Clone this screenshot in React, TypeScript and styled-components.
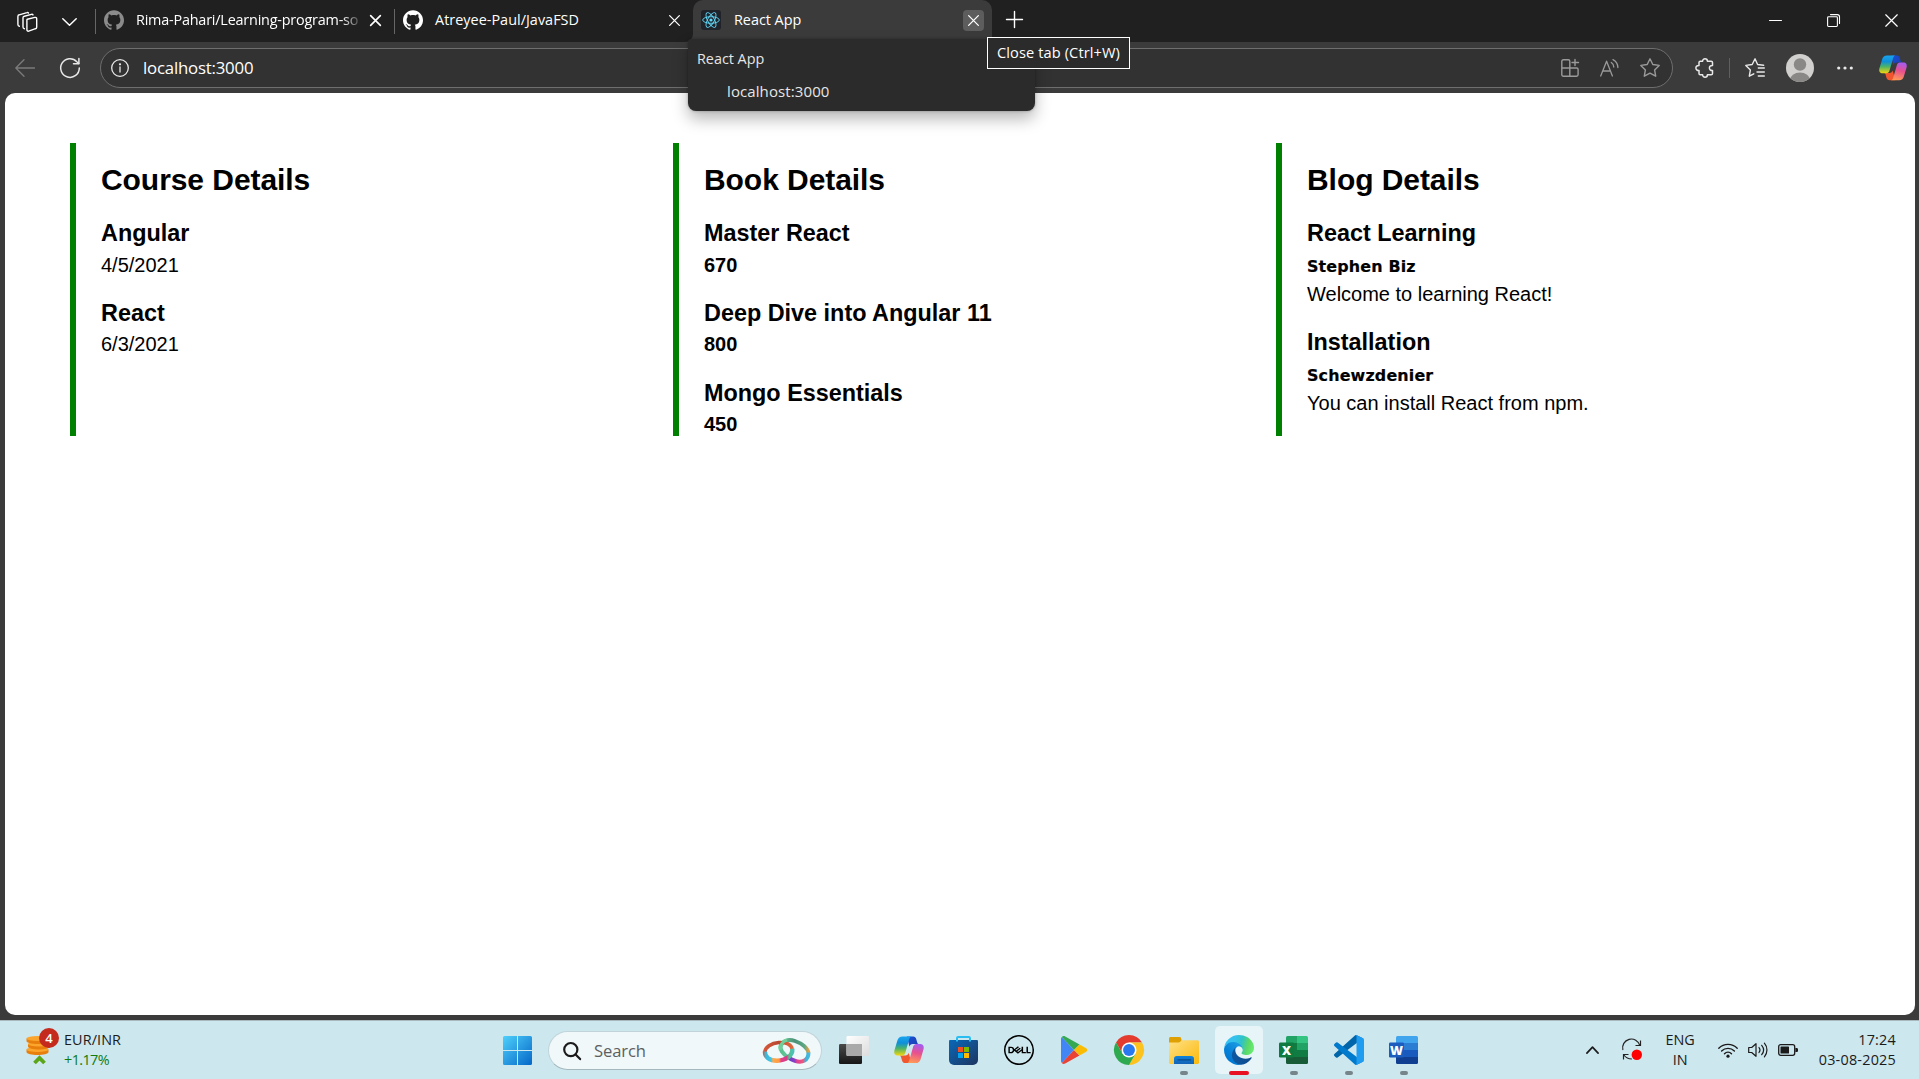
import React from "react";
import styled, { createGlobalStyle } from "styled-components";
import { SiGithub, SiDell } from "react-icons/si";

const UI = `"Open Sans", "Noto Sans", sans-serif`;

const GlobalStyle = createGlobalStyle`
  *, *::before, *::after { box-sizing: border-box; }
  html, body { margin: 0; padding: 0; overflow: hidden; background: #3b3b3b; }
  svg { display: block; flex: none; overflow: visible; }
  h2, h3, p { margin: 0; }
`;

const Desktop = styled.div`
  display: grid;
  grid-template-rows: 42px 51px 922px 5px 59px;
  width: 1919px;
  height: 1079px;
  background: #3b3b3b;
  font-family: ${UI};
  position: relative;
`;

/* ---------- tab strip ---------- */

const TabStrip = styled.header`
  display: flex;
  background: #202020;
  color: #fff;
`;

const StripTools = styled.div`
  display: flex;
  align-items: center;
  width: 95px;
  padding: 2px 0 0 17px;
  gap: 24px;
`;

const TabBox = styled.div<{ $active?: boolean; $width: number; $divided?: boolean }>`
  position: relative;
  display: flex;
  align-items: center;
  width: ${(p) => p.$width}px;
  height: 42px;
  padding: 0 8px 2px ${(p) => (p.$active ? 8 : 9)}px;
  background: ${(p) => (p.$active ? "#3b3b3b" : "transparent")};
  border-radius: ${(p) => (p.$active ? "10px 10px 0 0" : "0")};
  &::before {
    content: ${(p) => (p.$divided ? '""' : "none")};
    position: absolute;
    left: 0;
    top: 9px;
    width: 1px;
    height: 25px;
    background: #666;
  }
`;

const TabTitle = styled.span<{ $faded?: boolean; $spacing: number }>`
  flex: 1;
  margin-left: 12px;
  white-space: nowrap;
  font-size: 14.4px;
  line-height: 20px;
  letter-spacing: ${(p) => p.$spacing}px;
  mask-image: ${(p) => (p.$faded ? "linear-gradient(90deg, #000 90%, transparent 99%)" : "none")};
`;

const TabClose = styled.span<{ $hover?: boolean }>`
  display: flex;
  align-items: center;
  justify-content: center;
  width: 21px;
  height: 21px;
  border-radius: 4px;
  background: ${(p) => (p.$hover ? "#5d5d5d" : "transparent")};
`;

const ReactTile = styled.span`
  display: flex;
  align-items: center;
  justify-content: center;
  width: 20px;
  height: 20px;
  margin-right: 1px;
  border-radius: 3px;
  background: #20232a;
`;

const TabFoot = styled.svg`
  position: absolute;
  left: -8px;
  bottom: 0;
`;

const NewTab = styled.div`
  padding: 11px 0 0 14px;
`;

const WindowButtons = styled.div`
  display: flex;
  gap: 45px;
  margin-left: auto;
  padding: 14px 21px 0 0;
`;

/* ---------- toolbar ---------- */

const Toolbar = styled.nav`
  display: flex;
  align-items: center;
  padding: 0 12px 0 15px;
  color: #e8e8e8;
`;

const NavIcons = styled.div`
  display: flex;
  align-items: center;
  gap: 25px;
  width: 85px;
`;

const AddressBar = styled.div`
  display: flex;
  align-items: center;
  width: 1573px;
  height: 40px;
  padding: 0 12px 0 10px;
  border: 1px solid #6e6e6e;
  border-radius: 20px;
  background: #323232;
`;

const Url = styled.span`
  margin-left: 14px;
  color: #fff;
  font-size: 16.8px;
  line-height: 24px;
  letter-spacing: -0.2px;
`;

const AddressActions = styled.div`
  display: flex;
  align-items: center;
  gap: 21px;
  margin-left: auto;
  color: #9a9a9a;
`;

const ToolbarActions = styled.div`
  display: grid;
  grid-template-columns: 34px 16px 41px 51px 42px 28px;
  align-items: center;
  padding-left: 22px;
`;

const Divider = styled.span`
  width: 1px;
  height: 20px;
  background: #5f5f5f;
`;

/* ---------- overlays ---------- */

const TabCard = styled.div`
  position: absolute;
  left: 688px;
  top: 39px;
  z-index: 2;
  width: 347px;
  height: 72px;
  padding: 10px 9px;
  border-radius: 3px 3px 8px 8px;
  background: #2b2b2b;
  box-shadow: 0 8px 16px rgba(0, 0, 0, 0.28), 0 0 3px rgba(0, 0, 0, 0.3);
  color: #e6e6e6;
  font-size: 14.4px;
  line-height: 20px;
`;

const CardTitle = styled.div`
  letter-spacing: -0.02px;
`;

const CardUrl = styled.div`
  margin: 13px 0 0 30px;
  letter-spacing: 0.1px;
  font-size: 15px;
  line-height: 19px;
`;

const Tooltip = styled.div`
  position: absolute;
  left: 987px;
  top: 37px;
  z-index: 3;
  width: 143px;
  height: 32px;
  border: 1px solid #fff;
  background: #2b2b2b;
  color: #fff;
  font-size: 14.6px;
  line-height: 29px;
  letter-spacing: 0.11px;
  text-align: center;
  white-space: nowrap;
`;

/* ---------- page ---------- */

const Page = styled.main`
  margin: 0 4px 0 5px;
  padding: 50px 0 0 65px;
  border-radius: 10px;
  background: #fff;
  color: #000;
  font-family: "Liberation Sans", Arial, sans-serif;
`;

const Columns = styled.div`
  display: grid;
  grid-template-columns: repeat(3, 603px);
  grid-template-rows: 293px;
`;

const Entry = styled.article<{ $gap: number }>`
  margin-bottom: ${(p) => p.$gap}px;
`;

const Column = styled.section`
  border-left: 6px solid green;
  padding: 20px 0 0 25px;
  & > ${Entry}:last-child { margin-bottom: 0; }
`;

const Heading = styled.h2`
  margin-bottom: 22px;
  font-size: 30px;
  line-height: 34px;
  letter-spacing: -0.06px;
`;

const EntryTitle = styled.h3`
  margin-bottom: 6.6px;
  font-size: 23.4px;
  line-height: 28px;
`;

const Author = styled.p`
  margin: 9px 0 6px;
  font-family: "DejaVu Sans", "Liberation Sans", sans-serif;
  font-size: 15.9px;
  font-weight: 700;
  line-height: 21px;
  letter-spacing: 0.16px;
  -webkit-text-stroke: 0.2px #000;
`;

const Line = styled.p<{ $bold?: boolean }>`
  font-size: 20px;
  font-weight: ${(p) => (p.$bold ? 700 : 400)};
  line-height: 22px;
`;

/* ---------- taskbar ---------- */

const Taskbar = styled.footer`
  grid-row: 5;
  display: flex;
  align-items: center;
  background: #cde7ee;
  border-top: 1px solid #a9b8bc;
  color: #1b1b1b;
`;

const Widget = styled.div`
  display: flex;
  width: 503px;
  padding-left: 26px;
`;

const WidgetIcon = styled.div`
  position: relative;
  width: 38px;
  height: 40px;
`;

const Badge = styled.span`
  position: absolute;
  left: 13px;
  top: -2px;
  width: 20px;
  height: 20px;
  border-radius: 50%;
  background: #c42b1c;
  color: #fff;
  font-size: 13px;
  font-weight: 600;
  line-height: 20px;
  text-align: center;
`;

const TwoLines = styled.div<{ $align?: string; $spacing?: number }>`
  font-size: 14.4px;
  line-height: 20px;
  text-align: ${(p) => p.$align ?? "left"};
  letter-spacing: ${(p) => p.$spacing ?? 0}px;
  white-space: nowrap;
`;

const Gain = styled.div`
  color: #107c10;
  letter-spacing: -0.6px;
`;

const SearchBox = styled.div`
  display: flex;
  align-items: center;
  width: 274px;
  height: 39px;
  margin: 1px 4px 0 16px;
  padding: 0 11px 0 14px;
  border: 1px solid #c0d4da;
  border-bottom-color: #a5b8be;
  border-radius: 20px;
  background: #f0f8fa;
`;

const SearchLabel = styled.span`
  flex: 1;
  margin-left: 13px;
  color: #5c5f61;
  font-size: 16.6px;
  line-height: 22px;
  letter-spacing: -0.1px;
`;

const AppCell = styled.div`
  position: relative;
  display: flex;
  align-items: center;
  justify-content: center;
  width: 55px;
  height: 59px;
`;

const AppTile = styled.div<{ $current?: boolean }>`
  display: flex;
  align-items: center;
  justify-content: center;
  width: 48px;
  height: 48px;
  border-radius: 5px;
  background: ${(p) => (p.$current ? "#e7f4f8" : "transparent")};
`;

const Running = styled.span<{ $current?: boolean }>`
  position: absolute;
  bottom: 5px;
  left: 50%;
  width: ${(p) => (p.$current ? 20 : 8)}px;
  height: 4px;
  border-radius: 2px;
  background: ${(p) => (p.$current ? "#e81123" : "#768589")};
  transform: translateX(-50%);
`;

const Tray = styled.div`
  display: flex;
  align-items: center;
  margin-left: auto;
  padding-right: 23px;
`;

const TrayItem = styled.div<{ $left: number }>`
  margin-left: ${(p) => p.$left}px;
`;

/* ---------- line icons ---------- */

type StrokeProps = { w: number; h?: number; box: string; sw?: number; children: React.ReactNode };
const Stroke = ({ w, h, box, sw = 1.3, children }: StrokeProps) => (
  <svg width={w} height={h ?? w} viewBox={box} fill="none" stroke="currentColor" strokeWidth={sw} strokeLinecap="round" strokeLinejoin="round">
    {children}
  </svg>
);

const Cross = ({ size, sw = 1.4 }: { size: number; sw?: number }) => (
  <Stroke w={size} box="0 0 12 12" sw={sw}><path d="M.7.7l10.6 10.6M11.3.7L.7 11.3" /></Stroke>
);

const WorkspacesIcon = () => (
  <Stroke w={21} h={20} box="0 0 21 20" sw={1.4}>
    <path d="M10.3 7.2l7.6-1.8c1-.2 1.8.3 1.8 1.4v8.4c0 .8-.4 1.3-1.2 1.5l-6.8 2.4c-1 .3-1.8-.3-1.8-1.3V8.5c0-.7-.2-1.1.4-1.3z" />
    <path d="M16 2.9c-.3-.6-.9-.8-1.6-.6L7.3 4.2c-.9.2-1.3.8-1.3 1.6v9.2c0 .9.5 1.500 1.400 1.700" />
    <path d="M11.5.9C11.1.5 10.6.4 10 .6L2.200 2.800C1.300 3 .9 3.600.9 4.400v8.200c0 .9.5 1.500 1.400 1.700" />
  </Stroke>
);

const BackIcon = () => (
  <Stroke w={20} h={18} box="0 0 20 18"><path d="M9 .7L.8 9 9 17.3M.8 9h18.7" stroke="#7b7b7b" /></Stroke>
);

const ReloadIcon = () => (
  <Stroke w={20} box="0 0 20 20" sw={1.5}>
    <path d="M19.3 10A9.3 9.3 0 1 1 16.8 3.7L18.8 5.5" />
    <path d="M18.9.5v5.200h-5.400" />
  </Stroke>
);

const InfoIcon = () => (
  <Stroke w={18} box="0 0 18 18">
    <circle cx="9" cy="9" r="8.3" /><path d="M9 8v5" /><circle cx="9" cy="5.3" r=".5" fill="currentColor" />
  </Stroke>
);

const AppsIcon = () => (
  <Stroke w={18} box="0 0 18 18" sw={1.4}>
    <path d="M.8 2.500c0-1 .6-1.700 1.600-1.700h5c.8 0 1.400.6 1.400 1.400v15H2.400c-1 0-1.600-.6-1.600-1.600zM.8 9h14.900c.8 0 1.400.6 1.400 1.400v5.200c0 1-.6 1.600-1.600 1.600H8.800M14 .5v6M11 3.500h6.500" />
  </Stroke>
);

const ReadAloudIcon = () => (
  <Stroke w={19} h={18} box="0 0 19 18" sw={1.3}>
    <path d="M.7 17L6.600 2.200 12.400 17M2.700 12h7.700M11.300 3.500c1.600 1 2.500 2.600 2.500 4.500M13 .6c3 1.500 4.800 4.400 4.900 8" />
  </Stroke>
);

const StarIcon = () => (
  <Stroke w={20} h={19} box="0 0 20 19" sw={1.4}>
    <path d="M10 .8l2.800 5.700 6.400.9-4.600 4.500 1.100 6.300L10 15.200l-5.700 3 1.100-6.300L.8 7.400l6.400-.9z" />
  </Stroke>
);

const PuzzleIcon = () => (
  <Stroke w={19} h={20} box="0 0 19 20" sw={1.5}>
    <path d="M4 4.600c0-.8.5-1.300 1.300-1.300h2.300C7.600 1.700 8.600.8 10 .8s2.400.9 2.400 2.500h3.800c.8 0 1.300.5 1.300 1.300v2.900c-2-.1-3.100 1-3.100 2.500s1.100 2.600 3.100 2.500v2.900c0 .8-.5 1.300-1.300 1.300h-3.800c0 1.600-1 2.500-2.400 2.500s-2.400-.9-2.400-2.500H5.300c-.8 0-1.300-.5-1.300-1.300v-2.900C2 12.600.9 11.500.9 10S2 7.400 4 7.500z" />
  </Stroke>
);

const FavoritesIcon = () => (
  <Stroke w={20} h={19} box="0 0 20 19" sw={1.4}>
    <path d="M18.600 7.300l-6-.8L10 .8 7.200 6.500l-6.400.9 4.600 4.500-1.100 6.300 4.500-2.400M13.300 10h6M12 14h7.300M13.300 18h6" />
  </Stroke>
);

const Avatar = () => (
  <svg width="28" height="28" viewBox="0 0 28 28">
    <clipPath id="face"><circle cx="14" cy="14" r="14" /></clipPath>
    <g clipPath="url(#face)">
      <rect width="28" height="28" fill="#d2d0ce" />
      <circle cx="14" cy="10.5" r="6.2" fill="#8a8886" />
      <ellipse cx="14" cy="26" rx="10" ry="7.5" fill="#8a8886" />
    </g>
  </svg>
);

const ReactLogo = () => (
  <svg width="18" height="18" viewBox="-9 -9 18 18" fill="none" stroke="#61dafb" strokeWidth=".9">
    {[0, 60, 120].map((a) => <ellipse key={a} rx="8.3" ry="3.3" transform={`rotate(${a})`} />)}
    <circle r="1.6" fill="#61dafb" stroke="none" />
  </svg>
);

/* ---------- app icons ---------- */

const CopilotIcon = ({ size, id }: { size: number; id: string }) => (
  <svg width={size} height={size * 0.92} viewBox="0 0 30 27.6">
    <defs>
      <linearGradient id={`${id}a`} x1="0" y1="0" x2="0" y2="1">
        <stop offset="0" stopColor="#18a5ee" /><stop offset=".35" stopColor="#0f8fd8" /><stop offset=".62" stopColor="#4bb36a" /><stop offset="1" stopColor="#f5d70a" />
      </linearGradient>
      <linearGradient id={`${id}b`} x1=".6" y1="0" x2=".4" y2="1">
        <stop offset="0" stopColor="#a45cf0" /><stop offset=".45" stopColor="#e8508f" /><stop offset="1" stopColor="#ff9a57" />
      </linearGradient>
      <linearGradient id={`${id}c`} x1="0" y1="0" x2="1" y2="1">
        <stop offset="0" stopColor="#1a4fd6" /><stop offset="1" stopColor="#1b3fae" />
      </linearGradient>
    </defs>
    <path d="M13 .5h6.200c1.600 0 2.600.9 3 2.400l1 3.600c.3 1 .9 1.500 2 1.500h-6.400c-2 0-2.900 1.100-3.400 2.700z" fill={`url(#${id}c)`} />
    <path d="M17.500 27.100h-6.200c-1.800 0-2.800-1-3.300-2.600l-1-3.500c-.3-1-.9-1.600-2-1.600h6.200c2 0 3-1 3.500-2.700z" fill="#f0572f" />
    <path d="M8.700.5h9.100c-1.500.2-2.200 1.300-2.600 2.700l-4 13.800c-.5 1.600-1.500 2.600-3.300 2.600H4C1 19.600-.3 17.400.4 14.500L3.300 4.700C4 2 5.800.5 8.700.5z" fill={`url(#${id}a)`} />
    <path d="M21.600 27.100h-9c1.500-.2 2.200-1.300 2.600-2.700l4-13.800c.5-1.600 1.500-2.600 3.300-2.600H26c3 0 4.300 2.200 3.600 5.100l-2.900 9.800c-.7 2.700-2.400 4.200-5.100 4.200z" fill={`url(#${id}b)`} />
  </svg>
);

const StartIcon = () => (
  <svg width="29" height="29" viewBox="0 0 29 29">
    <linearGradient id="start" gradientUnits="userSpaceOnUse" x1="0" y1="0" x2="29" y2="29">
      <stop offset="0" stopColor="#4fd0fb" /><stop offset="1" stopColor="#0467c8" />
    </linearGradient>
    <path fill="url(#start)" d="M1.500 0H14v14H0V1.500A1.500 1.500 0 0 1 1.500 0zM15 0h12.500A1.500 1.500 0 0 1 29 1.500V14H15zM0 15h14v14H1.500A1.500 1.500 0 0 1 0 27.500zM15 15h14v12.500a1.500 1.500 0 0 1-1.500 1.500H15z" />
  </svg>
);

const BandsIcon = () => (
  <svg width="47" height="26" viewBox="0 0 47 26" fill="none">
    <defs>
      <linearGradient id="bandL" gradientUnits="userSpaceOnUse" x1="0" y1="0" x2="31" y2="0">
        <stop offset="0" stopColor="#e0523a" /><stop offset=".08" stopColor="#3ab7d8" /><stop offset=".26" stopColor="#46c4e4" /><stop offset=".32" stopColor="#ffa94d" /><stop offset=".52" stopColor="#ff9b3d" /><stop offset=".58" stopColor="#e23f8d" /><stop offset=".76" stopColor="#d53c86" /><stop offset=".84" stopColor="#4fc28f" /><stop offset="1" stopColor="#4bbfc4" />
      </linearGradient>
      <linearGradient id="bandR" gradientUnits="userSpaceOnUse" x1="16" y1="0" x2="47" y2="0">
        <stop offset="0" stopColor="#56bd8b" /><stop offset=".28" stopColor="#5fc79a" /><stop offset=".34" stopColor="#6a3fc0" /><stop offset=".5" stopColor="#8a3fc4" /><stop offset=".58" stopColor="#e2428f" /><stop offset=".78" stopColor="#ec5a7c" /><stop offset=".86" stopColor="#37b4dc" /><stop offset="1" stopColor="#4ab8dc" />
      </linearGradient>
      <linearGradient id="rimL" x1="0" y1="0" x2="1" y2="0">
        <stop offset="0" stopColor="#d4573a" /><stop offset=".5" stopColor="#b8452f" /><stop offset="1" stopColor="#e06a3c" />
      </linearGradient>
      <linearGradient id="rimR" x1="0" y1="0" x2="1" y2="0">
        <stop offset="0" stopColor="#6fcf97" /><stop offset=".5" stopColor="#4b8f77" /><stop offset=".85" stopColor="#5aa883" /><stop offset="1" stopColor="#e0a04a" />
      </linearGradient>
    </defs>
    <path d="M18 8c1-5 7-7.500 14-5 7.500 2.500 13 7.500 13.500 12" stroke="url(#rimR)" strokeWidth="3.800" />
    <path d="M18 7c-2 4 2 9.500 8 13 6 3.500 12 4.500 15.500 2.500 2.800-1.500 4-4.500 4-8" stroke="url(#bandR)" strokeWidth="4" />
    <path d="M1.800 14.500c0-5 6.500-9.500 14-10C23 4 28.500 6.500 29.200 11" stroke="url(#rimL)" strokeWidth="3.600" />
    <path d="M2 13.500c-.5 5.500 4.700 9.200 12 9.200 8.500 0 16-5 15.300-12" stroke="url(#bandL)" strokeWidth="4.400" />
    <path d="M17.500 12c-.8-4.500 2-8.500 6.500-10" stroke="#6fcf97" strokeWidth="3.400" />
  </svg>
);

const TaskViewIcon = () => (
  <svg width="30" height="28" viewBox="0 0 30 28">
    <linearGradient id="tvd" x1="0" y1="0" x2="0" y2="1"><stop offset="0" stopColor="#4a4a4a" /><stop offset="1" stopColor="#161616" /></linearGradient>
    <linearGradient id="tvl" x1="0" y1="0" x2="1" y2="1"><stop offset="0" stopColor="#fff" /><stop offset="1" stopColor="#dcdcdc" /></linearGradient>
    <rect y="8" width="23" height="20" rx="1.3" fill="url(#tvd)" />
    <rect x="7.5" width="22.5" height="20" rx="1.3" fill="url(#tvl)" />
    <path d="M7.500 8H23v12H8.800a1.300 1.300 0 0 1-1.300-1.300z" fill="#a9a9a9" />
  </svg>
);

const StoreIcon = () => (
  <svg width="29" height="29" viewBox="0 0 29 29">
    <linearGradient id="store" x1="0" y1="0" x2="1" y2="1"><stop offset="0" stopColor="#0a68b8" /><stop offset="1" stopColor="#1e3560" /></linearGradient>
    <path d="M8 7V2.200C8 1.400 8.500 1 9.200 1h10.600c.7 0 1.200.4 1.200 1.200V7" fill="none" stroke="#29bdf2" strokeWidth="2" />
    <path d="M0 5.300c0-.8.5-1.300 1.300-1.300h26.400c.8 0 1.300.5 1.300 1.300V24a5 5 0 0 1-5 5H5a5 5 0 0 1-5-5z" fill="url(#store)" />
    <path d="M8 4v1.500M21 4v1.500" stroke="#29bdf2" strokeWidth="2" />
    <path fill="#f25022" d="M9 11h5v5H9z" /><path fill="#7fba00" d="M15 11h5v5h-5z" />
    <path fill="#00a4ef" d="M9 17h5v5H9z" /><path fill="#ffb900" d="M15 17h5v5h-5z" />
  </svg>
);

const PlayIcon = () => (
  <svg width="26" height="28" viewBox="0 0 26 28">
    <path d="M.8 1C.3 1.500 0 2.200 0 3v22c0 .8.3 1.500.8 2L13 14z" fill="#4285f4" />
    <path d="M.8 1C1.700-.1 3-.2 4.200.5l14.300 8L13 14z" fill="#34a853" />
    <path d="M.8 27c.9 1.100 2.200 1.200 3.400.5l14.300-8L13 14z" fill="#ea4335" />
    <path d="M18.500 8.500l6.700 3.800c1.400.8 1.400 2.600 0 3.400l-6.700 3.800L13 14z" fill="#fbbc04" />
  </svg>
);

const ChromeIcon = () => (
  <svg width="30" height="30" viewBox="0 0 48 48">
    <path d="M24 12h20.800A24 24 0 0 0 3.200 12l10.400 18z" fill="#e33b2e" />
    <path d="M34.400 30L24 48a24 24 0 0 0 20.800-36H24z" fill="#fcc31e" />
    <path d="M13.600 30L3.200 12A24 24 0 0 0 24 48l10.400-18z" fill="#2da94f" />
    <circle cx="24" cy="24" r="12" fill="#fff" /><circle cx="24" cy="24" r="9.5" fill="#2a78ee" />
  </svg>
);

const FolderIcon = () => (
  <svg width="30" height="27" viewBox="0 0 30 27">
    <linearGradient id="folder" x1="0" y1="0" x2="1" y2="1"><stop offset="0" stopColor="#ffe187" /><stop offset="1" stopColor="#fbb90a" /></linearGradient>
    <linearGradient id="tray" x1="0" y1="0" x2="0" y2="1"><stop offset="0" stopColor="#0f83dc" /><stop offset="1" stopColor="#1263b5" /></linearGradient>
    <path d="M0 1.500C0 .7.700 0 1.500 0h9c.6 0 1 .2 1.400.6L12.500 3v5H0z" fill="#dfa003" />
    <path d="M0 5.500h9.500c.7 0 1.200-.2 1.700-.7L12 4c.5-.5 1-.7 1.700-.7h14.800c.9 0 1.500.6 1.500 1.500v20.700c0 .8-.6 1.500-1.500 1.500h-27C.6 27 0 26.300 0 25.500z" fill="url(#folder)" />
    <path d="M5 27v-5.200C5 20 6 19 7.800 19h14.400c1.800 0 2.800 1 2.800 2.800V27z" fill="url(#tray)" />
    <path d="M9 22.800h12.500" stroke="#0b4c8c" strokeWidth="1.2" strokeLinecap="round" />
  </svg>
);

const EdgeIcon = () => (
  <svg width="30" height="30" viewBox="0 0 256 256">
    <defs>
      <linearGradient id="e1" gradientUnits="userSpaceOnUse" x1="63" y1="178" x2="241" y2="178"><stop offset="0" stopColor="#0c59a4" /><stop offset="1" stopColor="#114a8b" /></linearGradient>
      <linearGradient id="e2" gradientUnits="userSpaceOnUse" x1="157" y1="100" x2="46" y2="222"><stop offset="0" stopColor="#1b9de2" /><stop offset=".16" stopColor="#1595df" /><stop offset=".67" stopColor="#0680d7" /><stop offset="1" stopColor="#0078d4" /></linearGradient>
      <linearGradient id="e3" gradientUnits="userSpaceOnUse" x1="20" y1="60" x2="250" y2="120"><stop offset="0" stopColor="#35c1f1" /><stop offset=".3" stopColor="#34c1ed" /><stop offset=".55" stopColor="#2fc2c8" /><stop offset=".8" stopColor="#5bd868" /><stop offset="1" stopColor="#66eb6e" /></linearGradient>
    </defs>
    <g transform="translate(-4.63 -4.92)">
      <path fill="url(#e1)" d="M235.680 195.460a93.730 93.730 0 0 1-10.540 4.710 101.870 101.870 0 0 1-35.900 6.460c-47.320 0-88.540-32.550-88.540-74.320A31.480 31.480 0 0 1 117.130 105c-42.800 1.800-53.800 46.400-53.800 72.530 0 73.880 68.090 81.370 82.760 81.370 7.910 0 19.840-2.300 27-4.560l1.310-.44a128.340 128.340 0 0 0 66.600-52.800 4 4 0 0 0-5.320-5.640z" />
      <path fill="url(#e2)" d="M110.340 246.340A79.200 79.200 0 0 1 87.600 225a80.720 80.720 0 0 1 29.530-120c3.120-1.470 8.450-4.130 15.540-4a32.350 32.350 0 0 1 25.690 13 31.880 31.880 0 0 1 6.360 18.660c0-.21 24.460-79.600-80-79.600-43.900 0-80 41.660-80 78.210a130.150 130.150 0 0 0 12.110 56 128 128 0 0 0 156.380 67.110 75.550 75.550 0 0 1-62.780-8z" />
      <path fill="url(#e3)" d="M156.940 153.780c-.81 1.050-3.300 2.500-3.300 5.660 0 2.610 1.700 5.120 4.720 7.230 14.380 10 41.490 8.680 41.560 8.680a59.560 59.560 0 0 0 30.270-8.350 61.380 61.380 0 0 0 30.430-52.880c.26-22.410-8-37.310-11.340-43.910-21.190-41.440-66.920-65.280-116.650-65.280a128 128 0 0 0-128 126.200c.48-36.540 36.800-66.050 80-66.050 3.500 0 23.460.34 42 10.070 16.340 8.580 24.900 18.940 30.850 29.210 6.180 10.670 7.280 24.150 7.280 29.520s-2.740 13.330-7.820 19.900z" />
    </g>
  </svg>
);

const OfficeLetter = styled.text`
  font-family: "Open Sans", sans-serif;
  font-size: 12.5px;
  font-weight: 800;
  fill: #fff;
  text-anchor: middle;
`;

const ExcelIcon = () => (
  <svg width="29" height="28" viewBox="0 0 29 28">
    <clipPath id="xl"><rect x="7" width="22" height="28" rx="1.5" /></clipPath>
    <g clipPath="url(#xl)">
      <path fill="#21a366" d="M7 0h11v7H7z" /><path fill="#33c481" d="M18 0h11v7H18z" />
      <path fill="#107c41" d="M7 7h11v14H7z" /><path fill="#21a366" d="M18 7h11v7H18z" />
      <path fill="#107c41" d="M18 14h11v7H18z" /><path fill="#185c37" d="M7 21h22v7H7z" />
    </g>
    <rect y="6.5" width="15" height="15" rx="1.3" fill="#0f7a40" />
    <OfficeLetter x="7.5" y="18.5">X</OfficeLetter>
  </svg>
);

const WordIcon = () => (
  <svg width="29" height="28" viewBox="0 0 29 28">
    <clipPath id="wd"><rect x="7" width="22" height="28" rx="1.5" /></clipPath>
    <g clipPath="url(#wd)">
      <path fill="#41a5ee" d="M7 0h22v7H7z" /><path fill="#2b7cd3" d="M7 7h22v7H7z" />
      <path fill="#185abd" d="M7 14h22v7H7z" /><path fill="#103f91" d="M7 21h22v7H7z" />
    </g>
    <rect y="6.5" width="15" height="15" rx="1.3" fill="#1b5cbe" />
    <OfficeLetter x="7.5" y="18.5">W</OfficeLetter>
  </svg>
);

const CodeIcon = () => (
  <svg width="30" height="30" viewBox="0 0 100 100">
    <path d="M96.500 10.800L75.900.9a6.200 6.200 0 0 0-7.100 1.200L1.300 63.600a4.200 4.200 0 0 0 0 6.200l5.500 5a4.200 4.200 0 0 0 5.300.2L93.400 13.400c2.700-2.100 6.600-.1 6.600 3.300v-.3c0-2.400-1.400-4.600-3.500-5.600z" fill="#0065a9" />
    <path d="M96.500 89.200l-20.600 9.900a6.200 6.200 0 0 1-7.100-1.200L1.300 36.400a4.200 4.200 0 0 1 0-6.200l5.500-5a4.200 4.200 0 0 1 5.300-.2l81.300 61.600c2.700 2.100 6.600.1 6.600-3.300v.3c0 2.400-1.400 4.600-3.500 5.600z" fill="#007acc" />
    <path d="M75.900 99.100a6.200 6.200 0 0 1-7.100-1.200c2.300 2.300 6.200.7 6.200-2.600V4.700c0-3.300-3.900-4.900-6.200-2.600A6.200 6.200 0 0 1 75.900.9l20.600 9.900A6.200 6.200 0 0 1 100 16.400v67.200c0 2.400-1.400 4.600-3.500 5.600z" fill="#1f9cf0" />
  </svg>
);

const CoinsIcon = () => (
  <svg width="26" height="38" viewBox="0 0 26 38">
    {[[11.5, 19.5], [13, 14], [11.5, 8.5]].map(([x, y]) => (
      <g key={y}>
        <path d={`M${x - 11} ${y}v2.500c0 4 22 4 22 0V${y}z`} fill="#e87f0c" />
        <ellipse cx={x} cy={y} rx="11" ry="2.4" fill="#fba52c" />
      </g>
    ))}
    <path d="M8.500 33l5-5 5 5" fill="none" stroke="#5ba518" strokeWidth="3.8" />
  </svg>
);

const SearchIcon = () => (
  <Stroke w={18} box="0 0 18 18" sw={2.2}><circle cx="7.8" cy="7.6" r="6.6" /><path d="M12.600 12.500l4.500 4.600" /></Stroke>
);

/* ---------- tray icons ---------- */

const SyncIcon = () => (
  <svg width="20" height="20" viewBox="0 0 20 20" fill="none" stroke="#222" strokeWidth="1.2">
    <path d="M.9 10A8.500 8.500 0 0 1 17.800 5.500M18.500.5v5h-5M6.500 14.500h-5v5M1.900 15c2 2.800 5 4 8 4" />
    <circle cx="14.8" cy="14.8" r="5.2" fill="#f00" stroke="none" />
  </svg>
);

const WifiIcon = () => (
  <Stroke w={20} h={15} box="0 0 20 15" sw={1.4}>
    <path d="M.8 5.200a13 13 0 0 1 18.400 0M3.600 8a9 9 0 0 1 12.800 0M6.500 10.700a5 5 0 0 1 7 0" />
    <circle cx="10" cy="13.2" r="1.6" fill="currentColor" stroke="none" />
  </Stroke>
);

const SpeakerIcon = () => (
  <Stroke w={20} h={16} box="0 0 20 16" sw={1.2}>
    <path d="M.7 5.500h3L8 1.700v12.600l-4.300-3.800h-3zM11 5.500c1.200 1.500 1.200 3.500 0 5M13.700 3.300c2.300 2.800 2.300 6.600 0 9.400M16.400 1.200c3.400 4 3.400 9.600 0 13.600" />
  </Stroke>
);

const BatteryIcon = () => (
  <svg width="20" height="12" viewBox="0 0 20 12">
    <rect x=".7" y=".7" width="16" height="10.6" rx="2" fill="none" stroke="#1b1b1b" strokeWidth="1.3" />
    <rect x="2.5" y="2.5" width="8.5" height="7" rx=".6" fill="#1b1b1b" />
    <path d="M17.400 4h1.100c.9 0 1.500.6 1.500 1.300v1.400c0 .7-.6 1.300-1.500 1.300h-1.100z" fill="#1b1b1b" />
  </svg>
);

/* ---------- data ---------- */

const courses = [{ name: "Angular", date: "4/5/2021" }, { name: "React", date: "6/3/2021" }];
const books = [
  { name: "Master React", price: 670 },
  { name: "Deep Dive into Angular 11", price: 800 },
  { name: "Mongo Essentials", price: 450 },
];
const blogs = [
  { title: "React Learning", author: "Stephen Biz", text: "Welcome to learning React!" },
  { title: "Installation", author: "Schewzdenier", text: "You can install React from npm." },
];

const apps: { name: string; icon: React.ReactNode; running?: boolean; current?: boolean }[] = [
  { name: "task view", icon: <TaskViewIcon /> },
  { name: "copilot", icon: <CopilotIcon size={30} id="tb" /> },
  { name: "store", icon: <StoreIcon /> },
  { name: "dell", icon: <SiDell size={30} color="#000" /> },
  { name: "play", icon: <PlayIcon /> },
  { name: "chrome", icon: <ChromeIcon /> },
  { name: "files", icon: <FolderIcon />, running: true },
  { name: "edge", icon: <EdgeIcon />, running: true, current: true },
  { name: "excel", icon: <ExcelIcon />, running: true },
  { name: "code", icon: <CodeIcon />, running: true },
  { name: "word", icon: <WordIcon />, running: true },
];

export default function App() {
  return (
    <Desktop>
      <GlobalStyle />
      <TabStrip>
        <StripTools>
          <WorkspacesIcon />
          <Stroke w={15} h={8} box="0 0 15 8" sw={1.5}><path d="M.8.8l6.700 6.400L14.200.8" /></Stroke>
        </StripTools>
        <TabBox $width={299} $divided>
          <SiGithub size={20} color="#8b8b8b" />
          <TabTitle $faded $spacing={-0.2}>Rima-Pahari/Learning-program-so</TabTitle>
          <TabClose><Cross size={11} sw={1.8} /></TabClose>
        </TabBox>
        <TabBox $width={299} $divided>
          <SiGithub size={20} color="#fff" />
          <TabTitle $spacing={0.03}>Atreyee-Paul/JavaFSD</TabTitle>
          <TabClose><Cross size={11} /></TabClose>
        </TabBox>
        <TabBox $width={299} $active>
          <TabFoot width="8" height="8" viewBox="0 0 8 8"><path d="M8 0v8H0a8 8 0 0 0 8-8z" fill="#3b3b3b" /></TabFoot>
          <ReactTile><ReactLogo /></ReactTile>
          <TabTitle $spacing={-0.02}>React App</TabTitle>
          <TabClose $hover><Cross size={11} /></TabClose>
        </TabBox>
        <NewTab><Stroke w={17} box="0 0 17 17" sw={1.4}><path d="M8.500.5v16M.5 8.500h16" /></Stroke></NewTab>
        <WindowButtons>
          <Stroke w={13} box="0 0 13 13" sw={1}><path d="M.5 6.500h12" /></Stroke>
          <Stroke w={13} box="0 0 13 13" sw={1.1}><path d="M1.500 2.800h8c.5 0 .9.4.9.9v7.900c0 .5-.4.9-.9.9h-8a.9.9 0 0 1-.9-.9V3.700c0-.5.4-.9.9-.9zM3.500.6h6.800c1.200 0 2.200.9 2.200 2.100v6.800" /></Stroke>
          <Cross size={13} sw={1.1} />
        </WindowButtons>
      </TabStrip>

      <Toolbar>
        <NavIcons><BackIcon /><ReloadIcon /></NavIcons>
        <AddressBar>
          <InfoIcon />
          <Url>localhost:3000</Url>
          <AddressActions><AppsIcon /><ReadAloudIcon /><StarIcon /></AddressActions>
        </AddressBar>
        <ToolbarActions>
          <PuzzleIcon />
          <Divider />
          <FavoritesIcon />
          <Avatar />
          <svg width="16" height="4" viewBox="0 0 16 4" fill="#e8e8e8"><circle cx="1.7" cy="2" r="1.6" /><circle cx="8" cy="2" r="1.6" /><circle cx="14.3" cy="2" r="1.6" /></svg>
          <CopilotIcon size={28} id="nav" />
        </ToolbarActions>
      </Toolbar>

      <Page>
        <Columns>
          <Column>
            <Heading>Course Details</Heading>
            {courses.map((c) => (
              <Entry key={c.name} $gap={23.2}><EntryTitle>{c.name}</EntryTitle><Line>{c.date}</Line></Entry>
            ))}
          </Column>
          <Column>
            <Heading>Book Details</Heading>
            {books.map((b) => (
              <Entry key={b.name} $gap={23.2}><EntryTitle>{b.name}</EntryTitle><Line $bold>{b.price}</Line></Entry>
            ))}
          </Column>
          <Column>
            <Heading>Blog Details</Heading>
            {blogs.map((b) => (
              <Entry key={b.title} $gap={23}><EntryTitle>{b.title}</EntryTitle><Author>{b.author}</Author><Line>{b.text}</Line></Entry>
            ))}
          </Column>
        </Columns>
      </Page>

      <Taskbar>
        <Widget>
          <WidgetIcon><CoinsIcon /><Badge>4</Badge></WidgetIcon>
          <TwoLines $spacing={0.1}>EUR/INR<Gain>+1.17%</Gain></TwoLines>
        </Widget>
        <StartIcon />
        <SearchBox>
          <SearchIcon />
          <SearchLabel>Search</SearchLabel>
          <BandsIcon />
        </SearchBox>
        {apps.map((a) => (
          <AppCell key={a.name}>
            <AppTile $current={a.current}>{a.icon}</AppTile>
            {a.running && <Running $current={a.current} />}
          </AppCell>
        ))}
        <Tray>
          <Stroke w={13} h={8} box="0 0 13 8" sw={1.7}><path d="M.9 7.100l5.600-5.900 5.600 5.900" /></Stroke>
          <TrayItem $left={23}><SyncIcon /></TrayItem>
          <TrayItem $left={23}><TwoLines $align="center">ENG<br />IN</TwoLines></TrayItem>
          <TrayItem $left={23}><WifiIcon /></TrayItem>
          <TrayItem $left={10}><SpeakerIcon /></TrayItem>
          <TrayItem $left={10}><BatteryIcon /></TrayItem>
          <TrayItem $left={21}><TwoLines $align="right" $spacing={0.22}>17:24<br />03-08-2025</TwoLines></TrayItem>
        </Tray>
      </Taskbar>

      <TabCard>
        <CardTitle>React App</CardTitle>
        <CardUrl>localhost:3000</CardUrl>
      </TabCard>
      <Tooltip>Close tab (Ctrl+W)</Tooltip>
    </Desktop>
  );
}
